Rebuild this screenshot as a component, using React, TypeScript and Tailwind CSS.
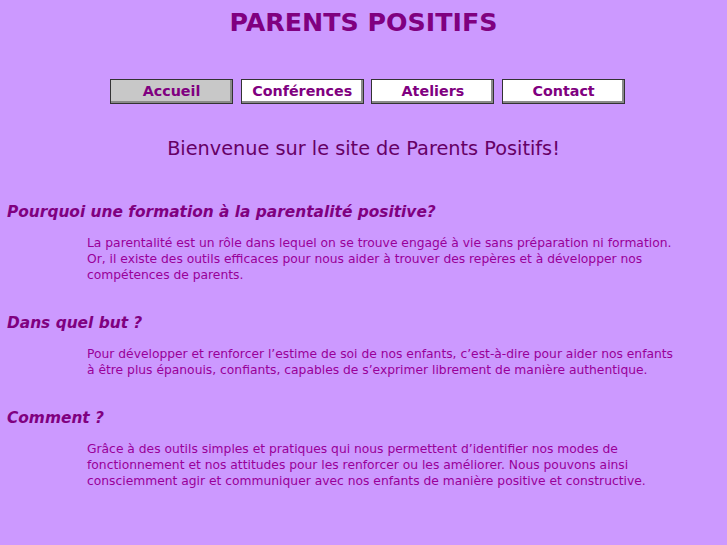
import React from "react";

const font = { fontFamily: '"DejaVu Sans", Verdana, sans-serif' };

function NavButton({ label, active }: { label: string; active?: boolean }) {
  return (
    <div
      className={`w-[123px] h-[25px] border border-[#333333] shadow-[inset_-2px_-2px_0_#8a8a8a] flex items-center justify-center text-[14.3px] font-bold text-[#800080] ${
        active ? "bg-[#c8c8c8]" : "bg-white"
      }`}
    >
      <span>{label}</span>
    </div>
  );
}

function Section({ title, children }: { title: string; children: React.ReactNode }) {
  return (
    <div>
      <h2 className="pl-[7px] text-[15.4px] leading-[20px] font-bold italic text-[#800080]">{title}</h2>
      <p className="ml-[87px] w-[592px] mt-[13px] text-[12.3px] leading-[16px] text-[#990099]">{children}</p>
    </div>
  );
}

export default function App() {
  return (
    <div className="w-[727px] h-[545px] bg-[#cc99ff] overflow-hidden" style={font}>
      <h1 className="pt-[9px] h-[79px] text-center text-[25.3px] leading-[28px] font-bold text-[#800080]">
        PARENTS POSITIFS
      </h1>
      <div className="flex gap-[7.7px] pl-[110px]">
        <NavButton label="Accueil" active />
        <NavButton label="Conférences" />
        <NavButton label="Ateliers" />
        <NavButton label="Contact" />
      </div>
      <div className="mt-[33px] text-center text-[19.3px] leading-[24px] text-[#660066]">
        Bienvenue sur le site de Parents Positifs!
      </div>
      <div className="mt-[41px] flex flex-col gap-[30px]">
        <Section title="Pourquoi une formation à la parentalité positive?">
          La parentalité est un rôle dans lequel on se trouve engagé à vie sans préparation ni formation. Or, il existe des
          outils efficaces pour nous aider à trouver des repères et à développer nos compétences de parents.
        </Section>
        <Section title="Dans quel but ?">
          Pour développer et renforcer l’estime de soi de nos enfants, c’est-à-dire pour aider nos enfants à être plus
          épanouis, confiants, capables de s’exprimer librement de manière authentique.
        </Section>
        <Section title="Comment ?">
          Grâce à des outils simples et pratiques qui nous permettent d’identifier nos modes de fonctionnement et nos
          attitudes pour les renforcer ou les améliorer. Nous pouvons ainsi consciemment agir et communiquer avec nos
          enfants de manière positive et constructive.
        </Section>
      </div>
    </div>
  );
}
